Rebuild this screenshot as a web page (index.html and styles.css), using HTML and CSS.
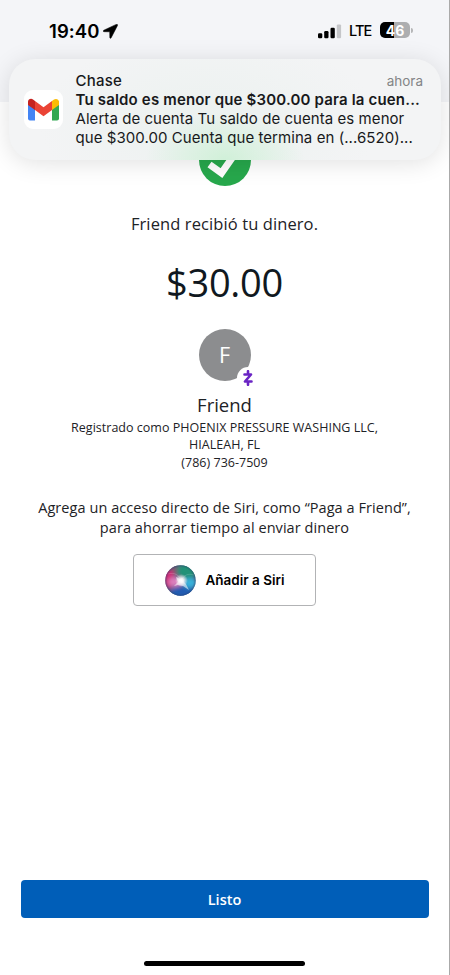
FILE: index.html
```html
<!DOCTYPE html>
<html lang="es">
<head>
<meta charset="utf-8">
<title>Listo</title>
<link rel="stylesheet" href="styles.css">
</head>
<body>
<main class="phone">
  <header class="top">
    <span class="time">19:40</span>
    <svg class="loc" width="15" height="15" viewBox="0 0 15 15"><path d="M13.200.4.8 6.200c-1 .5-.8 1.500.2 1.500l5.700.1.1 5.700c0 1 1 1.100 1.400.2L14.500 1.600C14.900.6 14.200 0 13.200.4Z" stroke="#000" stroke-width=".5"/></svg>
    <svg class="signal" width="24" height="15" viewBox="0 0 24 15"><rect x="0" y="9.300" width="4.300" height="4.900" rx="1.200"/><rect x="6.200" y="7" width="4.300" height="7.200" rx="1.200"/><rect x="12.500" y="3.700" width="4.300" height="10.500" rx="1.200"/><rect x="18.800" y=".4" width="4.300" height="13.800" rx="1.200" fill="#c5c6c9"/></svg>
    <span class="lte">LTE</span>
    <span class="battery">46</span><span class="nub"></span>
  </header>

  <section class="content">
    <svg class="check" width="52" height="52" viewBox="0 0 52 52"><circle cx="26" cy="26" r="26" fill="#27a84c"/><path d="m10.500 30.500 12 8.500L40 14" fill="none" stroke="#fff" stroke-width="7"/></svg>
    <p class="received">Friend recibió tu dinero.</p>
    <p class="amount">$30.00</p>
    <div class="avatar">F
      <span class="zelle"><svg width="12" height="16" viewBox="0 0 12 16"><path d="M6 1.200v2.600M6 12.200v2.600M2.500 4.500H9L3 11.500h6.500" fill="none" stroke="#6a24c4" stroke-width="2.600" stroke-linejoin="round" stroke-linecap="round"/></svg></span>
    </div>
    <h1 class="name">Friend</h1>
    <p class="registered">Registrado como PHOENIX PRESSURE WASHING LLC,<br>HIALEAH, FL<br>(786) 736-7509</p>
    <p class="hint">Agrega un acceso directo de Siri, como “Paga a Friend”,<br>para ahorrar tiempo al enviar dinero</p>
    <button class="siri">
      <svg width="31" height="31" viewBox="0 0 31 31">
        <defs>
          <clipPath id="orb"><circle cx="15.500" cy="15.500" r="15.200"/></clipPath>
          <filter id="soft" x="-50%" y="-50%" width="200%" height="200%"><feGaussianBlur stdDeviation="2.200"/></filter>
          <radialGradient id="glow"><stop offset="0" stop-color="#fff"/><stop offset=".3" stop-color="#fff" stop-opacity=".9"/><stop offset="1" stop-color="#fff" stop-opacity="0"/></radialGradient>
          <radialGradient id="rim"><stop offset=".85" stop-color="#263c64" stop-opacity="0"/><stop offset="1" stop-color="#263c64" stop-opacity=".4"/></radialGradient>
        </defs>
        <g clip-path="url(#orb)">
          <rect width="31" height="31" fill="#4a5f86"/>
          <g filter="url(#soft)"><ellipse cx="10" cy="5" rx="7" ry="5" fill="#735a73"/><ellipse cx="22" cy="6" rx="10" ry="8" fill="#219277"/><ellipse cx="4" cy="14" rx="6" ry="10" fill="#d02874"/><ellipse cx="10" cy="17" rx="7" ry="5" fill="#dc7fbd"/><ellipse cx="18" cy="28" rx="13" ry="7" fill="#205bb2"/><ellipse cx="25" cy="18" rx="7" ry="5" fill="#38b2dc"/></g>
          <path d="M3 9c7-2 11 1 13 7 3-6 7-8 13-6" fill="none" stroke="#fff" stroke-width=".7" opacity=".25"/>
          <path d="m17 15 4 4 3 6-6-4-5-1-4 1 4-4-2-5Z" fill="#fff" opacity=".55"/>
          <circle cx="16.500" cy="15.500" r="6.500" fill="url(#glow)"/><circle cx="15.500" cy="15.500" r="15.200" fill="url(#rim)"/>
        </g>
      </svg>
      <span>Añadir a Siri</span>
    </button>
  </section>
  <footer class="bottom"><button class="done">Listo</button><div class="home"></div></footer>

  <aside class="notification">
    <div class="app"><svg width="31" height="23" viewBox="0 0 31 24" preserveAspectRatio="none"><path d="M0 3.200V21.500Q0 23.500 2 23.500H7V8Z" fill="#4384f4"/><path d="M24 8v15.500h5q2 0 2-2V3.200Z" fill="#33a852"/><path d="m7 3.200 8.500 6.500L24 3.200V12.500L15.500 19 7 12.500Z" fill="#ea4335"/><path d="M24 3.200 26 1.600c2-1.500 5-.2 5 2.500v3.200L24 12.500Z" fill="#fbbc05"/><path d="M7 3.200 5 1.600C3-.1 0 1.400 0 4.100v3.200l7 5.200Z" fill="#c5221f"/></svg></div>
    <div class="message">
      <div class="row"><span class="sender">Chase</span><span class="when">ahora</span></div>
      <div class="subject">Tu saldo es menor que $300.00 para la cuen...</div>
      <div class="line">Alerta de cuenta Tu saldo de cuenta es menor</div>
      <div class="line">que $300.00 Cuenta que termina en (...6520)...</div>
    </div>
  </aside>
</main>
</body>
</html>
```
FILE: styles.css
```css
* { box-sizing: border-box; }
body { margin: 0; background: #fff; }
p, h1 { margin: 0; font-weight: 400; }
button { margin: 0; padding: 0; }
svg { display: block; flex: none; }
.phone {
  position: relative;
  display: flex;
  flex-direction: column;
  width: 450px;
  height: 975px;
  overflow: hidden;
  border-right: 1px solid #aaa;
  color: #1d2226;
  font-family: "Open Sans", sans-serif;
}
.top {
  display: flex;
  align-items: flex-start;
  height: 102px;
  padding: 22px 36px 0 49px;
  background: #f4f5f8;
  color: #000;
  font-family: Inter, sans-serif;
}
.time { width: 51px; font-size: 18.500px; line-height: 18px; font-weight: 600; letter-spacing: 0.1px; white-space: nowrap; }
.loc { margin: 2px 0 0 3px; }
.signal { margin: 1.500px 7px 0 auto; }
.lte { width: 23px; margin-right: 8px; font-size: 14.500px; line-height: 18px; font-weight: 500; letter-spacing: -0.9px; }
.battery {
  width: 30px;
  height: 16px;
  border-radius: 5px;
  background: linear-gradient(90deg, #000 47%, #adaeb0 47%);
  color: #fff;
  font-size: 14px;
  font-weight: 700;
  line-height: 17px;
  text-align: center;
}
.nub { width: 2px; height: 5px; margin: 6px 0 0 1px; border-radius: 0 2px 2px 0; background: #b5b6b8; }
.content { display: flex; flex: 1; flex-direction: column; align-items: center; padding-top: 32px; text-align: center; white-space: nowrap; }
.received { margin-top: 26px; font-size: 16.500px; line-height: 24px; letter-spacing: 0.1px; }
.amount { margin-top: 20px; font-size: 38px; line-height: 52px; letter-spacing: -0.3px; color: #101820; }
.avatar {
  position: relative;
  width: 52px;
  height: 52px;
  margin-top: 21px;
  border-radius: 50%;
  background: #8c8d8f;
  color: #fff;
  font-size: 21.500px;
  line-height: 51px;
}
.zelle { position: absolute; left: 38px; top: 38px; display: grid; place-items: center; width: 22px; height: 22px; border-radius: 50%; background: #fff; }
.name { margin-top: 12px; font-size: 18.500px; line-height: 24px; }
.registered { margin-top: 1.500px; font-size: 12.500px; line-height: 17.500px; letter-spacing: 0.02px; }
.hint { margin-top: 26.500px; font-size: 14.500px; line-height: 20px; letter-spacing: 0.06px; }
.siri {
  display: flex;
  align-items: center;
  gap: 10px;
  width: 183px;
  height: 52px;
  margin-top: 16.500px;
  padding-left: 30.500px;
  border: 1px solid #b2b3b5;
  border-radius: 4px;
  background: #fff;
  color: #000;
  font: 600 13.500px Inter, sans-serif;
}
.bottom { display: flex; flex-direction: column; align-items: center; padding-bottom: 9px; }
.done {
  width: 408px;
  height: 38px;
  border: 0;
  border-radius: 4px;
  background: #005eb8;
  color: #fff;
  font: 600 14.500px "Open Sans", sans-serif;
}
.home { width: 161px; height: 5px; margin-top: 43px; border-radius: 3px; background: #000; }
.notification {
  position: absolute;
  left: 9px;
  top: 59px;
  display: flex;
  width: 432px;
  height: 101px;
  border-radius: 26px;
  background:
    radial-gradient(ellipse 80px 48px at 216px 101px, #d0f0d8, rgba(208, 240, 216, 0)),
    radial-gradient(ellipse 170px 90px at 200px 65px, #ebf1ef, rgba(235, 241, 239, 0)),
    #f3f4f5;
  box-shadow: 0 3px 24px rgba(0, 0, 0, 0.12);
  color: #18191b;
  font-family: Inter, sans-serif;
}
.app { display: grid; place-items: center; width: 39px; height: 39px; margin: 31px 13px 0 14.500px; border-radius: 9px; background: #fff; }
.app svg { margin-top: -1px; }
.message { flex: 1; padding: 11.500px 18px 0 0; font-size: 15px; line-height: 19px; white-space: nowrap; }
.row { display: flex; justify-content: space-between; }
.sender { font-weight: 500; letter-spacing: 0.2px; }
.when { height: 19px; color: #838587; font-size: 13.500px; line-height: 20px; }
.subject { font-weight: 600; letter-spacing: 0.17px; }
.line { letter-spacing: 0.06px; }
```
